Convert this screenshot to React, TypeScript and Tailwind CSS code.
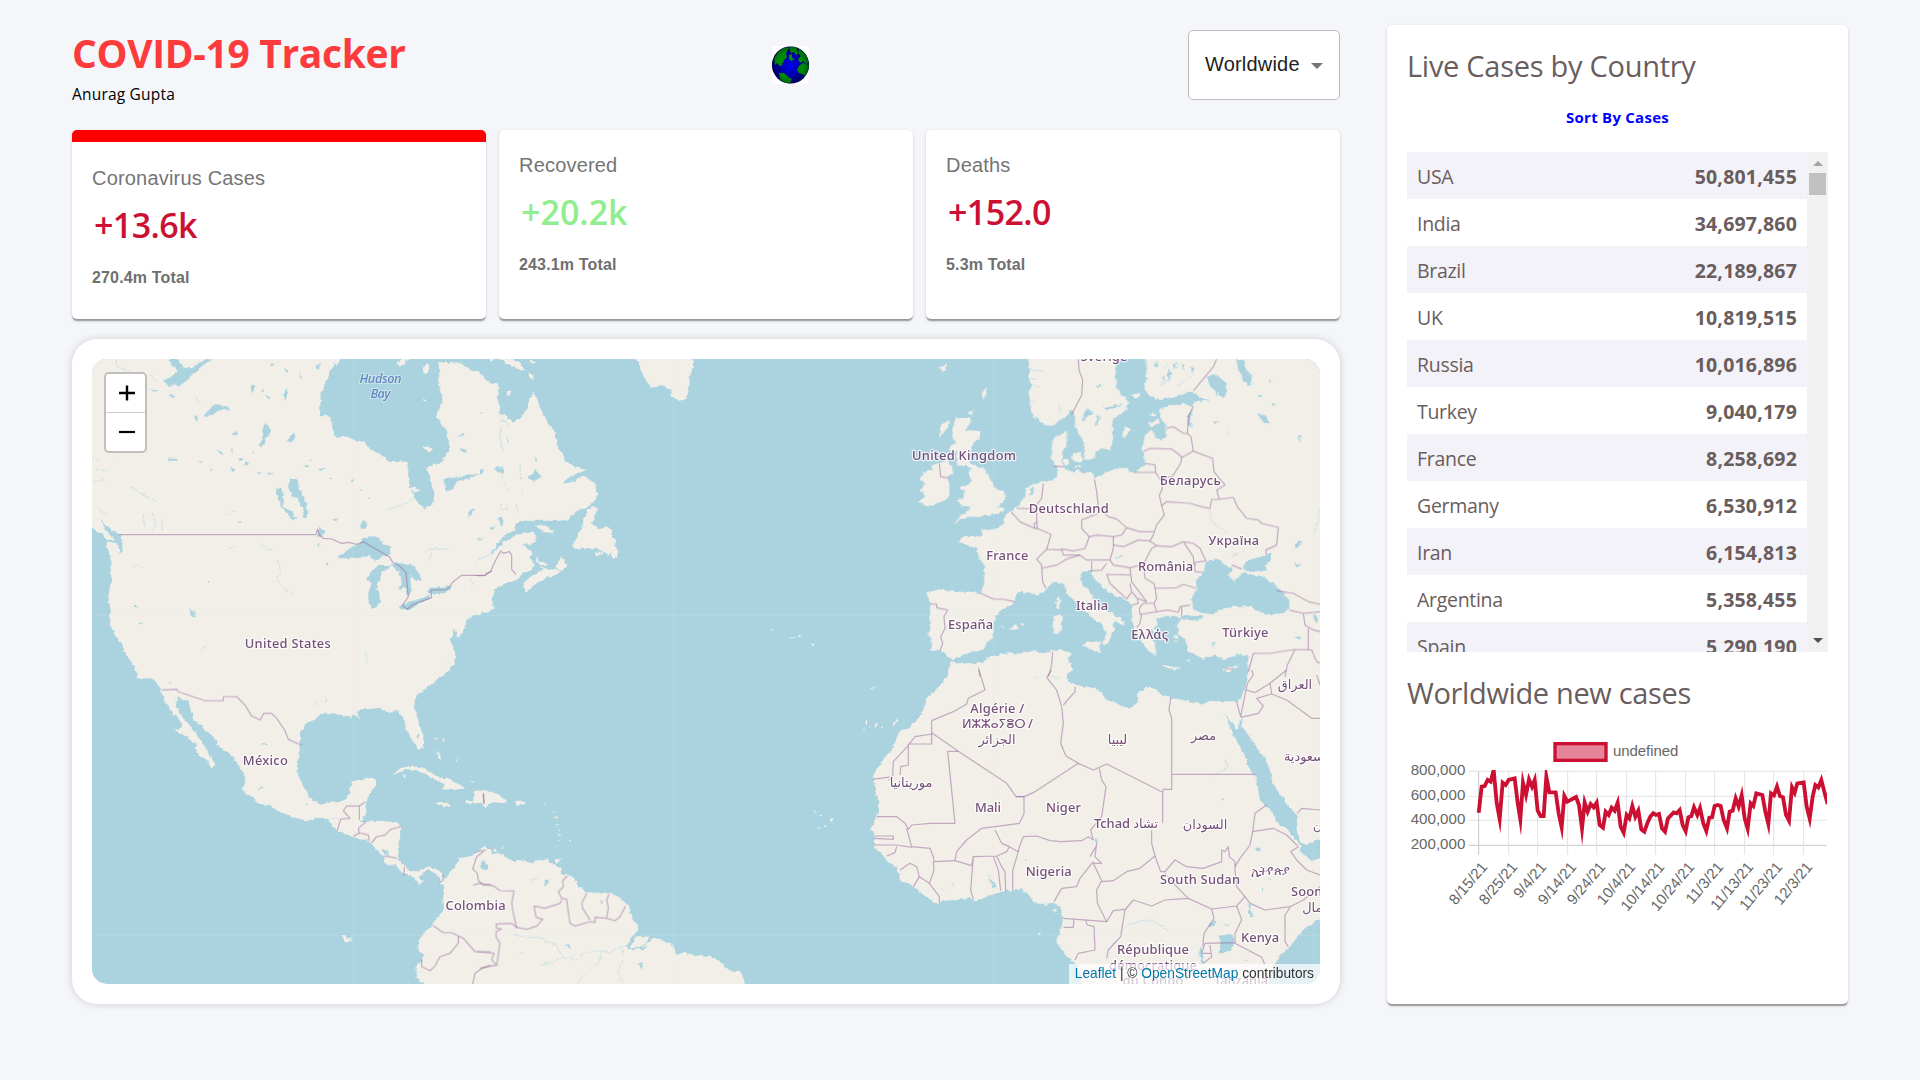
import React from "react";

const segoe = "font-['Open_Sans','Noto_Sans',sans-serif]";
const arial = "font-['Liberation_Sans',Arial,sans-serif]";

/* ---------- map geometry: six sheets, each drawn at three times the screen scale ---------- */

type Sheet = { at: string; land: string[]; water: string[]; rivers: string[]; borders: string[] };

const sheets: Sheet[] = [
  {
    at: "translate(70 335) scale(0.33333)",
    land: [
      "M60,60 L60,575 75,572 92,590 112,600 130,606 150,600 158,625 150,632 130,625 108,620 112,640 120,655 125,690 122,740 114,785 122,830 118,860 132,890 135,905 158,930 160,945 175,970 190,990 200,1012 200,1030 1105,1030 1118,1012 1140,1000 1135,985 1155,990 1160,965 1150,940 1140,915 1150,900 1148,880 1158,895 1165,910 1175,895 1190,875 1190,855 1215,840 1265,828 1265,145 1240,128 1220,105 1205,102 1180,90 1160,80 1135,85 1118,80 1105,84 1105,60Z",
      "M66,545 L95,570 125,595 148,615 135,618 112,612 95,598 80,592 66,575Z",
    ],
    water: [
      "M812,68 L790,95 780,112 768,140 765,150 752,185 750,240 780,243 788,280 798,312 830,303 852,315 880,320 905,348 930,358 960,380 985,378 1012,383 1016,425 1018,455 1030,475 1040,500 1065,524 1073,512 1082,515 1092,490 1085,450 1080,420 1072,400 1085,392 1110,385 1137,350 1137,320 1130,285 1110,260 1095,245 1108,220 1118,195 1108,160 1108,120 1105,68Z",
      "M66,578 L90,602 110,622 112,645 124,680 123,735 114,785 122,828 116,858 132,900 155,935 170,965 190,995 202,1025 60,1025 60,578Z",
      "M90,555 L115,575 140,595 155,605 158,650 148,655 145,622 118,600Z",
      "M295,72 L310,95 325,108 300,128 280,138 295,152 320,152 345,143 365,120 385,108 400,88 430,74 408,72 385,85 365,100 345,98 325,80 318,72Z",
      "M400,245 L420,218 440,208 475,215 478,222 445,228 425,240Z",
      "M372,245 L385,245 380,262Z",
      "M585,265 L595,270 603,285 590,310 575,338 567,330 580,305 575,295Z",
      "M658,432 L680,432 692,470 706,500 716,540 706,552 700,548 700,520 680,490 665,480 655,458Z",
      "M620,455 L640,470 640,515 660,525 678,550 670,558 650,535 632,510 618,478Z",
      "M872,560 L888,558 890,580 875,583Z",
      "M803,670 L835,640 865,628 880,610 905,602 930,608 938,628 958,632 962,658 930,665 915,678 895,660 870,668 840,670Z",
      "M960,690 L930,690 905,705 890,735 905,740 895,775 895,800 908,822 930,805 928,775 920,760 930,735 935,710 958,700Z",
      "M958,688 L985,684 1030,690 1060,735 1040,738 1020,720 1025,770 1012,785 1005,760 985,765 995,745 990,715 978,702Z",
      "M990,815 L1012,800 1030,798 1075,782 1085,790 1050,805 1015,827 995,825Z",
      "M1070,770 L1090,757 1120,758 1145,750 1140,765 1115,775 1080,776Z",
      "M1030,455 L1048,465 1045,472 1022,465Z",
      "M1108,60 L1130,84 1165,82 1205,104 1225,108 1245,132 1265,148 1265,60Z",
      "M1265,826 L1220,840 1190,855 1185,885 1165,905 1162,945 1155,990 1140,1002 1120,1025 1265,1025Z",
      "M358,822 L372,828 380,842 370,850 362,840Z",
      "M120,350 L140,380 143,384 128,362Z",
      "M655,310 L672,290 676,305 665,322 648,322Z",
      "M443,345 L456,348 460,360 450,356Z",
      "M1120,435 L1150,428 1200,420 1232,410 1200,430 1160,440 1150,462 1130,470 1125,445Z",
      "M1172,340 L1190,345 1188,352 1176,350Z",
      "M1192,550 L1195,530 1215,520 1205,535Z",
      "M1162,305 L1185,292 1180,302Z",
      "M240,165 L268,165 255,170Z",
      "M295,178 L315,180 305,186Z",
      "M295,370 L320,372 318,378 298,376Z",
      "M740,605 L748,578 764,588 755,605Z",
      "M485,298 L500,288 505,292 495,302Z",
      "M195,812 h8 v4 h-8Z M205,862 l15,2 -8,4Z M412,738 h6 v5 h-6Z M740,630 l12,-3 -4,8Z M768,682 l8,2 -4,8Z",
      "M540,155 l15,-4 -4,18 -8,10Z M570,170 l12,-8 -2,12Z M585,180 l12,4 -4,6Z M640,180 l10,-22 4,12 -8,30Z M600,85 l18,2 -12,6Z M690,105 l5,28 -6,-8Z M735,95 l14,-10 -2,20Z M640,98 l14,8 -6,6Z",
      "M480,345 l8,-6 -2,14Z M505,365 l12,8 -8,6Z M522,385 l20,-5 -12,12Z M480,395 l18,8 -10,8Z M420,405 l6,-10 0,12Z M385,378 l12,2 -4,5Z M560,410 l12,4 -4,6Z M590,415 l18,-2 -6,8Z M545,350 l10,2 -3,6Z M700,390 l16,2 -8,6Z M745,405 l22,-8 -14,12Z M775,430 l14,-3 -4,8Z M840,432 l16,3 -10,4Z M720,372 l8,4 -6,4Z M785,548 l25,4 -12,6Z M505,558 l8,4 -4,5Z M870,460 l8,3 -4,6Z M895,485 l5,6 -6,2Z",
      "M1060,335 l18,-10 12,18 -14,12 -10,-2Z",
    ],
    rivers: [
      "M625,672 L632,712 620,735 645,765 668,780",
      "M568,625 L590,642 608,645 M468,644 L500,632",
      "M66,360 L90,380 M70,440 L105,435 M75,405 L115,408 M80,520 L110,540 M220,540 L225,575 M250,535 L258,565 246,590 M275,555 L278,588 M190,690 L220,697",
      "M135,72 L142,95 180,108 M240,120 L262,140 M1205,720 L1205,755 M1215,688 L1255,665 M885,950 L892,990 M410,930 L390,950",
      "M1060,650 L1100,640 1140,645 M1085,655 L1075,680 M950,525 L1000,508 1035,488",
      "M180,455 L220,478 260,500 M470,540 L500,525 M370,175 L390,205",
    ],
    borders: [
      "M148,599 L738,599 742,582 748,600 760,610 785,612 815,625 835,622 860,628 882,620 900,632 958,665 968,682 985,690 1008,712 1012,755 1015,785 997,812 1012,822 1030,808 1085,788 1083,765 1132,764 1150,740 1175,721 1245,721 1265,708",
    ],
  },
  {
    at: "translate(480 335) scale(0.33333)",
    land: [
      "M-10,60 L-10,105 8,120 15,145 55,148 55,170 50,190 60,215 58,240 75,238 85,252 100,263 118,250 130,240 142,225 145,205 160,170 168,190 175,210 190,235 195,245 205,268 222,285 225,300 232,315 230,335 250,360 255,378 280,390 300,400 318,405 290,418 260,432 250,448 285,432 310,422 330,435 350,450 352,490 325,515 290,528 262,555 230,558 190,557 120,558 108,570 105,585 75,600 55,622 45,640 28,662 30,668 50,640 75,620 100,605 130,594 155,592 168,600 165,620 150,628 125,628 145,640 155,650 158,660 150,668 160,680 165,695 155,705 125,718 108,735 70,748 45,762 35,785 30,790 28,805 45,820 35,825 0,832 -10,832Z",
      "M128,752 L145,730 165,718 190,705 178,695 205,702 235,706 245,710 200,730 170,745 150,765 140,770Z",
      "M168,662 L180,680 205,685 210,690 190,694 172,682Z",
      "M228,700 L235,680 248,662 252,682 262,688 258,700 240,705Z",
      "M165,570 L200,572 222,592 215,597 190,590Z",
      "M275,632 L290,612 310,560 325,522 355,515 345,540 335,568 350,570 355,582 385,577 398,585 390,600 408,615 405,635 415,650 405,672 395,668 398,650 385,665 375,650 350,665 345,655 370,648 350,643 330,640 280,642Z",
      "M465,68 L478,90 490,125 515,160 545,150 575,165 575,185 603,200 620,190 628,155 630,120 638,100 640,68Z",
      "M60,72 L90,92 130,108 132,100 120,85 100,72Z",
      "M28,72 h15 l-5,8Z M148,72 l18,10 -8,4Z M145,112 l15,8 0,12 -12,-8Z M82,170 l8,-4 0,14 -8,2Z",
      "M925,905 l20,2 -8,4Z M955,900 h8 v6 h-8Z M988,926 l16,0 -2,6 -8,0Z M872,882 h4 v3 h-4Z",
    ],
    water: [
      "M142,425 L160,418 165,405 175,418 185,425 160,440Z M40,400 l25,-3 8,20 -20,-5Z M0,408 l10,-4 -5,14 -5,2Z M55,550 l8,-8 6,25 -6,8Z M28,578 l18,-5 -12,14Z M-10,608 l18,0 -8,10Z M0,228 l10,4 -6,5Z M165,370 h6 v6 h-6Z M80,305 l5,15 -5,4Z",
      "M255,442 L280,430 288,434 270,445Z",
    ],
    rivers: [
      "M68,505 a10,10 0 1,0 12,2 M-10,675 L30,662",
      "M60,275 L62,320 70,345 M120,390 L122,430 M110,510 L112,540 M65,425 L85,470 M125,460 L130,480 M60,255 L85,265 82,280",
    ],
    borders: ["M-10,722 L15,722 18,716 32,710 40,690 50,670 62,648 70,655 88,650 95,660 95,703 108,719"],
  },
  {
    at: "translate(900 335) scale(0.33333)",
    land: [
      "M90,948 L98,925 85,900 92,860 90,830 90,805 80,775 115,763 165,770 215,770 242,775 252,745 255,690 245,682 235,660 232,642 215,635 180,622 182,607 215,603 247,605 243,577 255,585 285,583 312,565 315,535 333,528 352,515 370,492 380,458 392,450 430,440 462,432 472,420 470,398 455,372 455,320 478,300 500,290 503,320 490,345 485,375 492,400 515,410 535,405 550,418 572,408 585,432 610,415 645,402 678,397 690,412 712,412 715,398 738,392 730,360 728,335 735,300 755,285 768,308 785,314 800,305 797,270 780,245 778,225 810,212 850,206 880,216 882,202 900,200 930,196 905,188 875,170 850,178 820,188 770,193 745,180 733,160 740,120 735,60 1265,60 1265,1025 1045,1025 1045,965 1015,955 990,968 970,972 940,960 910,972 885,958 865,950 862,920 835,900 830,870 845,852 880,850 905,845 870,838 840,845 800,842 770,852 768,875 745,885 750,905 765,930 770,962 745,948 730,930 718,905 708,890 697,860 695,835 697,812 670,792 650,785 620,765 600,745 580,725 572,705 548,708 542,720 545,745 575,780 590,810 610,825 640,835 672,860 672,872 645,858 638,870 645,885 630,905 625,930 610,930 612,915 620,895 600,865 565,838 530,805 505,780 490,745 465,740 445,752 432,770 405,780 365,770 345,780 345,800 335,810 300,828 278,860 278,885 282,905 265,920 245,945 185,960 162,975 145,965 125,945Z",
      "M384,60 L388,100 385,130 395,150 388,180 390,215 400,240 420,262 440,272 460,268 480,255 500,242 515,225 525,250 525,270 540,300 552,325 555,375 582,372 588,350 605,340 630,345 640,300 635,265 645,250 680,225 685,200 665,180 648,155 646,110 655,60Z",
      "M165,250 L185,250 212,248 212,262 195,285 240,288 238,305 215,335 205,355 208,385 250,400 262,420 275,440 285,462 315,470 315,492 295,515 312,520 308,532 270,540 240,545 205,545 180,555 160,567 180,545 205,528 215,515 185,512 165,500 190,485 195,470 178,455 205,450 215,440 205,415 215,400 200,390 172,392 170,350 145,345 165,320 155,300 160,275Z",
      "M112,385 L140,380 155,392 160,415 140,425 148,445 148,490 110,505 80,515 58,500 75,480 62,465 75,450 62,430 70,410 95,405 95,392Z",
      "M120,280 L135,262 148,255 145,275 125,300Z M118,290 l8,10 -8,8Z M245,175 l15,-20 -2,25 -8,15Z M208,232 l14,-10 -8,20Z M120,95 l20,-10 -6,20 -8,8Z",
      "M475,785 L482,800 478,822 470,822 466,805Z",
      "M460,845 L482,835 488,850 482,890 465,898 458,880Z",
      "M545,928 L565,922 605,918 598,935 602,955 580,948Z",
      "M780,990 L805,992 840,998 830,1002 795,998Z",
      "M968,1003 L990,995 1018,990 1000,1005 980,1012Z",
      "M668,290 L680,275 692,280 685,295 668,310Z M632,320 l6,-5 -4,25 -6,10Z",
      "M515,360 l25,-10 10,20 -12,15 -20,-8Z M488,372 l15,0 5,15 -14,4Z M525,395 l20,-8 -5,12Z M745,262 l30,-8 5,10 -30,12Z M750,238 l22,-5 -8,12Z M692,180 l20,-5 10,8 -20,6Z",
      "M330,880 l15,-10 12,8 -12,8Z M362,868 h8 v5 h-8Z M305,875 h6 v4 h-6Z",
      "M820,900 l15,2 -6,8Z M825,915 l10,5 -8,5Z M860,975 l12,-3 -6,12Z M745,868 l30,24 -4,4 -28,-20Z",
      "M142,1025 L150,985 160,978 175,990 200,990 240,985 270,965 320,955 360,955 400,948 430,955 455,948 480,942 515,955 503,970 515,992 500,1025Z",
    ],
    water: [
      "M955,672 L930,675 915,690 912,712 892,730 888,765 872,795 880,825 910,835 940,838 960,825 1000,812 1050,815 1080,832 1110,838 1150,835 1168,820 1168,795 1145,770 1120,748 1085,722 1058,720 1030,710 1005,740 985,720 1000,698 970,688Z",
      "M1028,700 L1050,710 1080,710 1098,702 1092,690 1110,680 1112,655 1090,662 1060,672 1035,685Z",
      "M862,238 L874,228 870,260 878,280 864,270Z",
      "M920,125 L945,118 975,140 982,165 970,185 955,182 945,165 930,155Z",
      "M1012,72 L1030,75 1040,105 1058,125 1050,152 1030,140 1015,105Z",
      "M1072,235 L1090,240 1108,255 1108,270 1090,262Z",
      "M548,240 L560,220 578,225 578,240 560,245 550,262Z M582,275 L595,240 600,245 590,270Z M610,215 l60,-8 -50,20Z",
      "M1075,180 h12 v8 h-12Z M940,258 l15,2 -8,8Z M1105,132 l8,3 -4,8Z M1115,200 l12,8 -8,6Z M1195,300 l10,2 -5,22Z M1180,640 l15,-25 12,5 -18,22Z M1180,680 l25,10 -10,3Z M1185,905 l22,2 -12,8Z M1240,835 l10,8 5,20 -15,-8Z M935,920 l8,2 -4,15Z",
      "M390,462 l10,-5 0,20 -8,5Z M590,150 h12 v5 h-12Z",
      "M760,90 l15,-12 -5,20Z M800,120 l10,-20 4,15 -8,25Z M820,90 l12,-8 -4,22Z M845,82 l12,10 -10,12Z M785,125 l8,-3 -2,18Z M870,95 l14,5 -8,12Z",
      "M855,842 L912,845 890,858 865,855Z",
      "M645,668 l25,-10 -4,6 -18,8Z",
    ],
    rivers: [
      "M930,525 L935,560 955,575 985,595",
      "M385,100 L430,110 M390,150 L420,160 M392,205 L410,195 M385,130 L410,130 M480,240 L478,205",
      "M1260,520 L1255,560 1238,600 M985,280 L980,300 M995,665 L1030,645",
      "M780,150 L815,125 M830,150 L850,140 M790,100 L800,85 M860,130 L880,120",
    ],
    borders: [
      "M535,72 L537,105 548,135 545,180 515,238",
      "M950,72 L940,95 880,168",
      "M880,213 L866,245 862,295 873,305 880,348 845,368 842,385 825,412 815,425 780,432",
      "M800,280 L820,275 850,295 862,295",
      "M730,350 L750,340 815,342 840,360 845,368 M735,385 L765,390 767,412 700,412 M767,412 L785,440 787,460 778,482 785,512 793,540 770,570 760,600 750,618 770,632",
      "M880,348 L910,360 938,370 942,410 958,430 975,450 950,465 958,493 935,493 930,520 905,515 870,505 800,500 785,512",
      "M958,493 L1000,487 1012,515 1040,550 1075,555 1085,565 1135,577 1130,630 1098,645 1098,660",
      "M583,432 L590,470 595,515 625,545 650,552 680,578 720,590 760,590",
      "M595,535 L545,555 545,580 568,605 590,600 640,605 665,600 680,578",
      "M568,605 L555,640 520,648 485,642 490,660 540,660 560,675 630,675 640,640 640,605",
      "M640,630 L670,635 715,615 750,618 M630,675 L640,690 690,698 730,688 755,640 770,632",
      "M770,632 L815,635 850,620 880,625 900,640 918,678 885,682 885,710 910,712 M850,620 L880,665 882,690",
      "M690,698 L695,740 725,780 740,800 M730,688 L735,730 762,745 765,760",
      "M765,760 L830,758 850,748 890,760 M765,760 L770,790 762,805 770,830 720,838 718,820 730,805 762,805",
      "M770,830 L805,825 835,832 840,815 870,810 M845,815 L845,845 M725,838 L720,865 710,878",
      "M690,720 L620,718 630,745 680,792 695,770 690,745 M695,770 L712,790 740,800 M712,790 L715,805 695,810",
      "M575,680 L575,708 605,705 620,685 M430,445 L425,490 410,510 410,560 412,580 453,598 440,643 M333,530 L360,560 400,578 412,582",
      "M350,520 L405,522 M405,578 L402,565 412,562",
      "M440,643 L410,672 425,690 425,700 470,690 500,672 540,660 M440,643 L485,645 M425,695 L428,740 438,760",
      "M460,393 L490,395 M243,775 L280,792 310,793 345,800",
      "M92,806 L110,808 110,818 143,825 132,845 135,880 122,905 128,925 120,948",
      "M118,385 L122,425 148,430",
      "M458,950 L455,990 445,1025 M235,998 L240,1025",
      "M1130,767 L1180,775 1225,800 1262,808 M1168,825 L1210,835 1215,870 1240,885 1262,890 M1210,835 L1262,830",
      "M1045,1010 L1060,955 1110,955 1185,943 1235,945 1250,980 1262,985 M1185,943 L1162,990 1155,1025 M1225,880 L1225,945",
      "M995,690 L1025,702 M975,1002 L1002,1000",
    ],
  },
  {
    at: "translate(70 670) scale(0.33333)",
    land: [
      "M198,-20 L198,5 215,14 240,22 258,35 270,55 272,65 285,90 300,120 325,145 337,165 330,178 315,178 340,195 352,203 378,222 380,250 405,265 425,292 437,285 415,250 400,225 385,200 365,172 345,150 330,130 318,105 322,82 355,95 362,120 370,150 385,160 410,185 430,200 442,212 437,222 470,245 500,275 515,300 527,328 518,355 530,372 550,382 565,400 600,408 620,422 640,430 680,445 710,457 745,443 765,445 785,462 800,480 820,492 845,497 870,508 898,512 905,522 925,545 940,560 942,580 975,585 1000,612 1025,620 1040,632 1050,642 1062,632 1045,620 1055,608 1075,600 1100,612 1112,625 1108,640 1120,650 1120,690 1122,715 1105,740 1090,765 1065,785 1055,800 1045,825 1047,845 1065,855 1050,875 1035,890 1045,915 1038,922 1068,950 1265,950 1265,540 1245,530 1220,550 1195,560 1165,565 1158,590 1140,605 1125,628 1118,612 1100,597 1070,590 1045,605 1022,602 1005,590 985,572 982,540 987,520 995,472 978,457 930,452 888,455 872,456 885,430 888,398 900,370 915,345 918,330 890,323 845,335 838,370 822,392 780,395 755,403 735,392 720,385 700,350 683,310 685,260 690,225 690,190 710,158 735,150 748,133 775,130 812,137 838,142 850,138 870,145 862,130 872,118 900,117 930,113 955,130 980,122 1002,145 1008,180 1030,215 1045,240 1058,235 1060,200 1045,150 1032,110 1040,75 1080,45 1110,22 1140,-2 1150,-20Z",
      "M965,318 L990,295 1020,288 1060,293 1100,318 1140,330 1185,355 1150,360 1115,358 1125,345 1090,325 1060,310 1035,302 1000,300Z",
      "M1205,365 L1225,362 1265,365 1265,395 1250,410 1240,398 1185,400 1190,392 1225,395 1222,378Z",
      "M1098,400 L1115,395 1142,405 1125,410Z M1100,240 l12,18 0,14 -8,-8Z M1090,205 l20,-3 -18,6Z M1112,202 l14,10 -4,4Z M1155,260 l8,14 -3,2Z M998,316 l10,0 -3,10Z M1185,298 l8,6 M1200,335 l10,-2 0,4Z",
      "M815,795 l10,0 5,8 18,2 -4,10 -15,3 -10,-6Z",
    ],
    water: [
      "M1232,580 l10,-12 12,18 -6,18 -10,-5Z M935,535 l15,8 10,15 -10,-2 -12,-10Z M575,222 h18 v3 h-18Z M565,353 h14 v3 h-14Z M706,396 l10,8 -6,1Z M1040,195 l8,-2 2,10 -8,2Z M292,38 l8,-2 2,8Z",
    ],
    rivers: ["M735,100 L750,112 M755,95 L772,92 765,82 M785,445 L805,447"],
    borders: [
      "M275,60 L320,58 325,65 405,92 460,92 460,80 500,80 525,105 545,138 570,150 582,130 605,130 620,145 645,182 655,208 690,224 697,224",
      "M802,480 L812,447 840,445 820,422 830,408 868,408 868,450 M868,408 L886,395 M888,455 L865,475 868,490 850,498 M868,488 L895,495 898,512 M905,518 L920,500 945,495 962,478 992,470",
      "M942,557 L980,565 M1003,590 L1002,618 M1118,612 L1120,630 1108,638",
      "M1090,767 L1120,788 1145,788 1165,798 1165,820 1140,850 1110,860 1095,888 1080,902 1055,890 1055,870",
      "M1165,798 L1180,805 1215,845 1262,845 M1208,942 L1215,910 1235,895 1262,885",
      "M1240,545 L1220,560 1208,597 1222,610 1225,632 1240,645 1262,643 M1240,370 L1242,400",
    ],
  },
  {
    at: "translate(480 670) scale(0.33333)",
    land: [
      "M-20,560 L-10,548 15,530 20,535 8,545 5,560 15,568 25,555 60,548 82,562 85,570 120,570 155,580 180,570 205,568 215,582 240,590 245,612 265,613 290,632 295,650 320,667 350,670 390,670 420,685 447,708 452,735 460,752 475,765 472,782 460,798 508,800 500,820 520,806 550,812 582,828 590,858 608,847 640,855 690,857 715,870 735,890 755,905 783,906 790,925 797,950 -20,950Z",
      "M-20,362 L25,362 60,375 80,392 78,398 35,397 15,412 5,395 -20,402Z",
      "M106,395 L135,395 137,403 107,405Z M225,567 l14,0 -2,12 -10,-1Z M40,540 l8,-5 2,10 -8,0Z",
      "M222,440 l8,0 0,8 -6,0Z M230,460 h5 v6 h-5Z M236,477 h6 v6 h-6Z M236,493 h6 v4 h-6Z M234,510 h5 v4 h-5Z M218,425 h5 v4 h-5Z M267,510 h5 v4 h-5Z M65,532 h8 v3 h-8Z M192,402 h4 v3 h-4Z M232,528 h4 v3 h-4Z",
      "M1172,55 l8,-4 4,6 -6,4Z M1155,152 l6,0 0,10 -4,0Z M1180,168 l10,-8 2,6 -8,8Z M1203,170 l8,0 0,8 -8,0Z M1238,165 l10,-20 6,2 -12,24Z M1168,168 h6 v4 h-6Z M1152,178 h6 v3 h-6Z",
      "M1000,422 l8,4 -4,6Z M1018,435 h8 v3 h-8Z M1050,445 h6 v6 h-6Z M1032,468 l8,0 -2,6 -6,0Z M1012,473 h10 v3 h-10Z",
    ],
    water: [
      "M8,570 L15,575 22,590 20,600 8,602 0,588Z",
      "M192,650 L195,630 205,628 205,640Z M255,825 l15,-3 5,15Z M475,878 l10,0 5,20 -8,-4Z M362,690 l6,0 0,8 -6,0Z",
      "M438,828 L460,795 480,790 465,808 450,832 490,830 505,815 490,837 445,838Z",
    ],
    rivers: [
      "M100,795 L140,803 178,802 225,825 250,862 290,868 310,850 350,842 390,845 420,832 440,825",
      "M180,885 L215,878 245,865 M292,942 L320,905 355,880 365,845 M425,835 L430,860 M430,870 L412,905 428,938 M148,630 L170,628 M120,850 L132,850",
    ],
    borders: [
      "M10,370 L12,402 M-20,645 L0,640 40,648 60,662 102,663 95,700 100,730 110,775 M-10,545 L18,540",
      "M262,617 L248,632 250,650 235,665 245,685 260,688 262,705 270,760 285,768 330,755 345,757 345,742 380,745 405,752 420,740 437,708",
      "M245,690 L240,700 195,715 162,708 168,742 188,748 170,768 140,778 110,772 95,760 48,762 50,775 65,777 48,785 48,800 60,820 50,885",
      "M320,670 L305,700 308,715 330,750 M387,672 L380,690 385,715 380,742 M-10,845 L42,850 35,870 50,885 0,895",
    ],
  },
  {
    at: "translate(850 670) scale(0.33333)",
    land: [
      "M300,-20 L297,0 285,30 262,55 225,90 222,115 210,140 180,172 150,183 140,205 125,240 105,260 90,285 78,300 68,322 78,350 78,372 88,395 85,425 78,445 62,478 75,490 75,510 70,530 90,545 110,570 145,600 150,630 190,650 230,682 265,702 285,692 320,690 350,685 385,692 430,672 470,662 515,658 535,672 555,700 585,702 610,698 630,712 640,745 632,780 618,812 638,845 665,872 685,895 700,950 1255,950 1265,900 1290,855 1320,830 1360,778 1415,742 1415,-20 1200,-20 1195,0 1190,40 1180,75 1160,97 1120,97 1085,92 1055,103 1010,92 965,85 935,75 920,58 890,52 862,70 860,100 840,117 815,105 785,95 765,88 755,65 720,52 690,48 665,38 645,22 650,10 665,0 665,-20Z",
      "M610,720 l8,-6 2,6 -6,8Z M568,788 h6 v6 h-6Z",
      "M1120,-6 l20,2 -8,8Z",
    ],
    water: [
      "M1120,122 L1128,135 1145,158 1158,178 1166,180 1172,145 1175,148 1172,172 1185,180 1215,225 1240,260 1258,290 1268,342 1310,400 1340,435 1342,470 1350,520 1368,522 1415,505 1415,562 1385,573 1355,550 1350,525 1325,495 1310,475 1285,462 1270,430 1245,405 1230,390 1225,360 1220,325 1195,290 1188,262 1170,230 1150,195 1140,165Z",
      "M1108,800 L1125,790 1152,795 1152,820 1145,840 1125,850 1108,848 1112,825Z",
      "M1218,532 l14,0 -2,12 -10,0Z M1195,700 l5,5 2,25 10,10 -8,2 -8,-15Z M1075,768 l20,-18 5,6 -18,15Z M1120,762 l20,2 -6,6Z M1048,850 l4,-20 4,5 0,20 4,25 -6,5Z M1236,655 l4,2 -4,10Z M1115,385 h8 v4 h-8Z M735,508 h8 v12 h-8Z M415,625 l18,10 6,15 -8,8 -6,-15Z M525,568 h4 v8 h-4Z M1255,623 h8 v4 h-8Z",
      "M1350,15 l10,18 -4,2Z",
    ],
    rivers: [
      "M1095,320 L1105,305 1120,300 1130,272 1135,290 1120,302 M775,840 L800,810 M815,785 L840,760 905,750 955,780 M555,22 L562,25 M605,20 L628,22 M410,610 L428,632",
      "M305,635 L312,648 M275,655 L285,660 M1180,870 L1200,872",
    ],
    borders: [
      "M387,0 L405,60 355,85 350,102 310,125 245,152 245,188 245,222 175,222 175,285 152,290 150,315 M245,192 L195,200 172,230 130,275 128,320 68,328 M128,325 L115,330",
      "M245,188 L325,244 470,340 498,380 522,380 550,368 685,280 730,300 770,282 938,367 938,460 M938,367 L940,358 965,358 965,313 1215,313 M965,313 L965,145 957,120 962,85",
      "M325,244 L293,244 315,460 240,460 185,465 175,478 165,460 140,440 80,440 M498,380 L522,380 522,432 508,460 435,470",
      "M605,0 L590,22 620,60 635,110 640,160 632,220 648,258 685,280 M675,50 L675,65 640,105",
      "M748,295 L755,330 768,350 755,440 722,480 730,510 715,500 695,512 632,515 600,512 560,498 520,500 508,530 505,545 488,602 488,660",
      "M435,470 L395,475 350,510 320,545 315,572 365,587 370,560 440,558 470,545 478,530 455,520 435,480 M478,530 L505,545 M440,558 L455,590 465,605 467,662 M430,560 L445,600 452,662 M370,560 L362,660 370,688",
      "M170,475 L185,530 240,535 250,560 252,575 315,572 M140,525 L185,532 M72,525 L140,525 M75,505 L130,508 130,498 75,498 M110,558 L135,548 140,530 M150,600 L180,580 200,590 208,620 238,640 252,600 250,575 M190,650 L208,620 M238,640 L268,680 268,700",
      "M740,520 L735,560 755,580 730,580 755,632 740,660 742,700 770,755 M720,560 L738,530 M730,575 L690,625 680,650 635,655 612,695 M755,635 L790,632 830,605 870,595 915,558 905,520 905,480",
      "M915,558 L932,605 945,605 975,570 1010,590 1060,595 1115,575 1115,540 1125,545 1135,530 1138,560 1155,575 1155,600",
      "M1155,590 L1170,565 1200,525 1208,485 1215,430 1250,405 M1208,485 L1270,475 1310,495 1345,530 M1345,530 L1322,545 1340,570 1370,600 1410,615",
      "M945,610 L980,650 1015,685 1085,717 1160,708 1185,680 1160,650 1155,600 M1015,685 L945,690 905,708 850,690 825,720 M640,745 L770,755 790,722 825,718 812,800 775,840 770,865 M640,772 L670,772 672,745 M705,748 L712,765 732,770 735,840 685,850 675,870",
      "M1160,708 L1175,750 1155,790 1155,818 1065,820 1055,850 M1185,680 L1200,700 1245,720 1320,710 1360,690 1410,650 M1320,712 L1305,735 1305,815 1315,830 M1155,820 L1235,862 1245,885",
      "M1085,717 L1092,745 1062,790 1058,830 M1080,825 L1085,860 1060,880 M1058,850 L1085,850",
      "M1160,97 L1172,140 1188,60 1192,40 1210,15 1205,0 M1188,60 L1215,68 1260,40 1310,0 M1260,40 L1265,72 1220,85 1240,108 1225,130 1172,142 M1265,72 L1310,90 1385,145 1410,145 M1400,15 L1410,45 M1342,430 L1355,415 1410,420",
    ],
  },
];

type Label = { t: string; x: number; y: number; w?: number };

/* positions are in screen pixels; x is the middle of the word */
const labels: Label[] = [
  { t: "United States", x: 287.8, y: 648.4, w: 86 },
  { t: "México", x: 265.3, y: 765, w: 45 },
  { t: "Colombia", x: 475.5, y: 909.6, w: 60 },
  { t: "United Kingdom", x: 964, y: 459.8, w: 104 },
  { t: "Deutschland", x: 1068.7, y: 512.9, w: 80 },
  { t: "France", x: 1007.3, y: 560, w: 42 },
  { t: "España", x: 970.5, y: 628.5, w: 45 },
  { t: "Italia", x: 1092, y: 610, w: 32 },
  { t: "Беларусь", x: 1190.3, y: 484.7, w: 61 },
  { t: "Україна", x: 1233.7, y: 545, w: 51 },
  { t: "România", x: 1165.5, y: 571, w: 55 },
  { t: "Ελλάς", x: 1149.7, y: 639.4, w: 37 },
  { t: "Türkiye", x: 1245.3, y: 637.2, w: 46 },
  { t: "Sverige", x: 1104, y: 361, w: 47 },
  { t: "Algérie /", x: 997.3, y: 713.3, w: 54 },
  { t: "ⵍⵣⵣⴰⵢⴻⵔ /", x: 997.5, y: 728.3, w: 71 },
  { t: "الجزائر", x: 997, y: 744 },
  { t: "ليبيا", x: 1117.5, y: 744 },
  { t: "مصر", x: 1203.5, y: 740.2 },
  { t: "العراق", x: 1295, y: 689 },
  { t: "السعودية", x: 1308, y: 761.2 },
  { t: "موريتانيا", x: 911, y: 786.7 },
  { t: "Mali", x: 988, y: 811.7, w: 26 },
  { t: "Niger", x: 1063.5, y: 812.2, w: 35 },
  { t: "Tchad تشاد", x: 1126, y: 827.7 },
  { t: "السودان", x: 1205, y: 828.5 },
  { t: "اليمن", x: 1327, y: 829 },
  { t: "Nigeria", x: 1048.7, y: 875.7, w: 46 },
  { t: "South Sudan", x: 1200, y: 883.7, w: 80 },
  { t: "ኢትዮጵያ", x: 1270.5, y: 875, w: 39 },
  { t: "Soomaaliya", x: 1327, y: 895.5, w: 72 },
  { t: "الصومال", x: 1325, y: 911.5 },
  { t: "Kenya", x: 1260, y: 941.5, w: 38 },
  { t: "République", x: 1153, y: 954.3, w: 72 },
  { t: "démocratique", x: 1153, y: 969.5, w: 88 },
  { t: "du Congo", x: 1153, y: 984.5, w: 61 },
  { t: "Tanzania", x: 1241, y: 985, w: 54 },
];

function WorldMap() {
  return (
    <svg viewBox="92 359 1228 625" className="block h-full w-full" preserveAspectRatio="none">
      <defs>
        <filter id="coast" x="92" y="359" width="1228" height="625" filterUnits="userSpaceOnUse">
          <feTurbulence type="fractalNoise" baseFrequency="0.22" numOctaves="2" seed="4" />
          <feDisplacementMap in="SourceGraphic" scale="4.5" xChannelSelector="R" yChannelSelector="G" />
        </filter>
      </defs>
      <rect x="92" y="359" width="1228" height="625" fill="#aad3df" />
      <g filter="url(#coast)">
        {sheets.map((s) => (
          <g key={s.at} transform={s.at}>
            {s.land.map((d) => (
              <path key={d} d={d} fill="#f2efe9" />
            ))}
            {s.water.map((d) => (
              <path key={d} d={d} fill="#aad3df" />
            ))}
            {s.rivers.map((d) => (
              <path key={d} d={d} fill="none" stroke="#aad3df" strokeWidth="2.2" strokeOpacity="0.7" />
            ))}
          </g>
        ))}
        {/* Hudson Strait islands */}
        <g transform="translate(70 335) scale(0.33333)" fill="#f2efe9">
          <path d="M1058,100 L1068,85 1078,90 1075,112 1065,118Z M980,85 L995,72 1020,68 1005,85 990,95Z M1015,462 L1030,455 1050,465 1045,473Z M1060,340 l15,-8 14,10 -14,10Z M1055,200 l10,-8 0,6Z" />
        </g>
      </g>
      {sheets.map((s) => (
        <g key={s.at} transform={s.at}>
          {s.borders.map((d) => (
            <path key={d} d={d} fill="none" stroke="#966a99" strokeOpacity="0.52" strokeWidth="3.6" strokeLinejoin="round" />
          ))}
        </g>
      ))}
      <path d="M353.5,359V984M673.5,359V984M993.5,359V984M1313.5,359V984M92,615.5H1320M92,935.5H1320" stroke="#d8e4e2" strokeOpacity="0.22" strokeWidth="1" />
      <g
        className="font-['Noto_Sans','Open_Sans','DejaVu_Sans',sans-serif]"
        fontSize="12.9"
        fill="#755078"
        stroke="#ffffff"
        strokeOpacity="0.75"
        strokeWidth="2.6"
        strokeLinejoin="round"
        paintOrder="stroke"
        textAnchor="middle"
        fontWeight="500"
      >
        {labels.map((l) => (
          <text key={l.t} x={l.x} y={l.y} textLength={l.w}>
            {l.t}
          </text>
        ))}
      </g>
      <g
        className="font-['Noto_Sans',sans-serif]"
        fontSize="12.8"
        fontStyle="italic"
        fontWeight="500"
        fill="#5f87bf"
        stroke="#ffffff"
        strokeOpacity="0.4"
        strokeWidth="2"
        paintOrder="stroke"
        textAnchor="middle"
      >
        <text x="380.5" y="383" textLength="42">Hudson</text>
        <text x="380.5" y="398" textLength="20">Bay</text>
      </g>
    </svg>
  );
}

function Globe() {
  return (
    <svg viewBox="0 0 37 38" className="h-[38px] w-[37px] rounded-sm bg-white">
      <defs>
        <radialGradient id="sea" cx="50%" cy="52%" r="52%">
          <stop offset="0" stopColor="#0000f4" />
          <stop offset="0.45" stopColor="#0000b4" />
          <stop offset="1" stopColor="#000048" />
        </radialGradient>
        <radialGradient id="ground" gradientUnits="userSpaceOnUse" cx="18" cy="19" r="19">
          <stop offset="0" stopColor="#009a00" />
          <stop offset="0.7" stopColor="#008a08" />
          <stop offset="1" stopColor="#005a10" />
        </radialGradient>
        <clipPath id="disc">
          <circle cx="18.5" cy="19" r="18.5" />
        </clipPath>
      </defs>
      <circle cx="18.5" cy="19" r="18.6" fill="url(#sea)" />
      <g clipPath="url(#disc)" fill="url(#ground)">
        <path d="M3,19 L2,13 6,6 13,1 17,2 15,5 14,8 15,11 12,14 11,17 9,18 11,19 8,20 5,17Z" />
        <path d="M17,1 L25,0 25,4 26,8 24,9 22,6 19,7 18,4Z" />
        <path d="M27,2 L34,8 37,17 34,18 31,15 28,17 26,13 29,10 26,7Z" />
        <path d="M27,20 L31,17 37,19 37,26 33,30 30,28 27,27 25,24Z" />
        <path d="M7,27 L12,27 16,31 20,33 18,38 12,37 8,33Z" />
        <path d="M17,9 L20,8 20,12 23,13 19,15 17,13Z" />
      </g>
    </svg>
  );
}

const linePoints =
  "296,758 305,680 314,678 323,660 332,665 341,630 350,728 359,777 368,668 377,675 386,660 404,655 413,728 421,778 429,668 438,705 447,658 456,680 464,660 473,752 482,768 491,768 499,650 508,697 527,697 536,760 545,802 553,708 562,725 588,711 597,735 606,806 614,728 623,755 632,732 641,742 650,728 659,795 669,803 677,755 686,765 695,743 704,752 713,728 722,800 731,818 740,765 748,775 757,738 766,770 775,752 784,808 793,815 802,790 811,770 820,760 828,765 837,762 846,805 855,815 864,775 881,757 890,760 899,750 908,795 917,813 925,772 934,768 942,742 952,765 960,744 970,790 979,813 988,773 996,772 1004,738 1013,735 1022,738 1031,780 1041,805 1049,755 1058,752 1067,715 1076,740 1085,706 1094,775 1103,806 1112,730 1120,738 1129,700 1147,705 1156,755 1165,792 1173,700 1182,706 1191,680 1200,708 1209,712 1218,765 1227,782 1236,682 1244,698 1252,670 1271,667 1280,740 1289,776 1298,710 1306,675 1315,682 1324,660 1333,695 1343,732";

const ticks: [number, string][] = [
  [296, "8/15/21"],
  [386, "8/25/21"],
  [473, "9/4/21"],
  [563, "9/14/21"],
  [650, "9/24/21"],
  [740, "10/4/21"],
  [827, "10/14/21"],
  [917, "10/24/21"],
  [1004, "11/3/21"],
  [1094, "11/13/21"],
  [1181, "11/23/21"],
  [1271, "12/3/21"],
];

const levels: [number, string][] = [
  [634, "800,000"],
  [709, "600,000"],
  [781, "400,000"],
  [856, "200,000"],
];

function CasesChart() {
  return (
    <svg viewBox="81 510 1263 555" className={`block h-[185px] w-[421px] ${arial}`} fill="#666666" fontSize="45">
      <defs>
        <clipPath id="plot">
          <rect x="286" y="630" width="1055" height="226" />
        </clipPath>
      </defs>
      <rect x="525" y="551" width="153" height="50" fill="#e68599" stroke="#cc1034" strokeWidth="10" />
      <text x="699" y="588" textLength="196">
        undefined
      </text>
      {levels.map(([y, t]) => (
        <g key={t}>
          <path d={`M266,${y}H1341`} stroke={y === 856 ? "#c8c8c8" : "#e2e2e2"} strokeWidth="3" />
          <text x="256" y={y + 12} textAnchor="end" textLength="164" lengthAdjust="spacingAndGlyphs">
            {t}
          </text>
        </g>
      ))}
      {ticks.map(([x, t]) => (
        <g key={t}>
          <path d={`M${x},634V885`} stroke={x === 296 ? "#c8c8c8" : "#e2e2e2"} strokeWidth="3" />
          <text transform={`translate(${x + 28} 922) rotate(-50)`} textAnchor="end">
            {t}
          </text>
        </g>
      ))}
      <polyline points={linePoints} fill="none" stroke="#cc1034" strokeWidth="11.5" strokeMiterlimit="10" clipPath="url(#plot)" />
    </svg>
  );
}

const countries: [string, string][] = [
  ["USA", "50,801,455"],
  ["India", "34,697,860"],
  ["Brazil", "22,189,867"],
  ["UK", "10,819,515"],
  ["Russia", "10,016,896"],
  ["Turkey", "9,040,179"],
  ["France", "8,258,692"],
  ["Germany", "6,530,912"],
  ["Iran", "6,154,813"],
  ["Argentina", "5,358,455"],
  ["Spain", "5,290,190"],
];

const cardShadow =
  "shadow-[0_2.5px_1.25px_-1.25px_rgba(0,0,0,0.2),0_1.25px_1.25px_0_rgba(0,0,0,0.14),0_1.25px_3.75px_0_rgba(0,0,0,0.12)]";

type StatProps = { title: string; value: string; total: string; valueClass: string; active?: boolean };

function StatCard({ title, value, total, valueClass, active }: StatProps) {
  return (
    <div
      className={`h-[189px] flex-1 overflow-hidden rounded-[5px] bg-white px-5 ${cardShadow} ${
        active ? "border-t-[12px] border-[#ff0000] pt-[21px]" : "pt-5"
      }`}
    >
      <p className={`text-[20px] leading-[30px] tracking-[0.19px] text-[#757575] ${arial}`}>{title}</p>
      <h2 className={`mt-[11px] pl-0.5 text-[34px] leading-[42px] font-semibold ${segoe} ${valueClass}`}>{value}</h2>
      <p className={`mt-5 text-[16px] leading-[24px] font-bold tracking-[0.15px] text-[#6f6f6f] ${arial}`}>{total}</p>
    </div>
  );
}

export default function App() {
  return (
    <div className="flex h-[1080px] w-[1920px] items-start justify-between overflow-hidden bg-[#f5f6fa] pt-[25px] pr-[72px] pl-[72px]">
      <main className="w-[1268px]">
        <header className="flex h-[105px] items-start">
          <div className="w-[700px]">
            <h1 className={`text-[39px] leading-[56px] font-bold tracking-[-0.35px] whitespace-nowrap text-[#fc3c3c] ${segoe}`}>
              COVID-19 Tracker
            </h1>
            <p className={`mt-[1px] text-[15.5px] leading-[24px] tracking-[0.2px] text-black ${segoe}`}>Anurag Gupta</p>
          </div>
          <div className="mt-[21px]">
            <Globe />
          </div>
          <div className="ml-auto pt-[5px]">
            <button
              className={`flex h-[70px] w-[152px] items-center rounded-[5px] border border-[#bdbdbd] bg-white pb-[2px] pl-[16px] text-[20px] tracking-[0.19px] text-[#212121] ${arial}`}
            >
              Worldwide
              <svg viewBox="0 0 12 6" className="mt-[3px] ml-[11px] h-[6px] w-[12px]">
                <path d="M0,0H12L6,6Z" fill="#757575" />
              </svg>
            </button>
          </div>
        </header>

        <section className="flex gap-[13px]">
          <StatCard active title="Coronavirus Cases" value="+13.6k" total="270.4m Total" valueClass="tracking-[-0.6px] text-[#cc1034]" />
          <StatCard title="Recovered" value="+20.2k" total="243.1m Total" valueClass="text-[#90ee90]" />
          <StatCard title="Deaths" value="+152.0" total="5.3m Total" valueClass="tracking-[-0.6px] text-[#cc1034]" />
        </section>

        <section className="mt-5 h-[665px] rounded-[25px] bg-white p-5 shadow-[0_0_10px_-1px_rgba(0,0,0,0.2)]">
          <div className="relative h-[625px] overflow-hidden rounded-[15px]">
            <WorldMap />
            <div className="absolute top-[13px] left-[12px] flex h-[81px] w-[43px] flex-col rounded-[5px] border-[2.5px] border-black/20 bg-white bg-clip-padding">
              <div className="flex flex-1 items-center justify-center border-b border-[#cccccc] pl-[2px]">
                <svg viewBox="0 0 16 16" className="h-4 w-4">
                  <path d="M0,8H16M8,0.5V15.5" stroke="#000" strokeWidth="2.4" />
                </svg>
              </div>
              <div className="flex flex-1 items-center justify-center pl-[2px]">
                <svg viewBox="0 0 16 16" className="h-4 w-4">
                  <path d="M0,8H16" stroke="#000" strokeWidth="2.2" />
                </svg>
              </div>
            </div>
            <div className={`absolute right-0 bottom-0 h-5 bg-white/70 px-[6px] text-[13.75px] leading-[19px] whitespace-nowrap text-[#333333] ${arial}`}>
              <span className="text-[#0078a8]">Leaflet</span> | © <span className="text-[#0078a8]">OpenStreetMap</span> contributors
            </div>
          </div>
        </section>
      </main>

      <aside className={`h-[979px] w-[461px] rounded-[5px] bg-white px-5 ${cardShadow}`}>
        <h3 className={`mt-[21px] text-[29px] leading-[40px] tracking-[-0.28px] whitespace-nowrap text-[#6a5d5d] ${segoe}`}>
          Live Cases by Country
        </h3>
        <p className={`mt-[19px] text-center text-[15px] leading-[24px] font-bold tracking-[0.25px] text-[#0000ff] ${segoe}`}>Sort By Cases</p>
        <div className="mt-[23px] flex h-[500px] overflow-hidden">
          <div className="w-[400px]">
            {countries.map(([name, cases]) => (
              <div key={name} className={`flex h-[47px] items-center justify-between px-[10px] pt-[3px] text-[19.5px] text-[#6a5d5d] odd:bg-[#f3f2f8] ${segoe}`}>
                <span className="tracking-[-0.3px]">{name}</span>
                <span className="font-bold tracking-[0.2px]">{cases}</span>
              </div>
            ))}
          </div>
          <div className="flex w-[21px] flex-col items-center bg-[#f1f1f1]">
            <svg viewBox="0 0 10 5" className="mt-[9px] h-[5px] w-[10px]">
              <path d="M0,5L5,0L10,5Z" fill="#a3a3a3" />
            </svg>
            <div className="mt-[7px] h-[22px] w-[17px] bg-[#c1c1c1]" />
            <svg viewBox="0 0 10 5" className="mt-auto mb-[9px] h-[5px] w-[10px]">
              <path d="M0,0L5,5L10,0Z" fill="#505050" />
            </svg>
          </div>
        </div>
        <h3 className={`mt-[21px] text-[29px] leading-[40px] tracking-[-0.35px] whitespace-nowrap text-[#6a5d5d] ${segoe}`}>
          Worldwide new cases
        </h3>
        <div className="mt-[17px]">
          <CasesChart />
        </div>
      </aside>
    </div>
  );
}
